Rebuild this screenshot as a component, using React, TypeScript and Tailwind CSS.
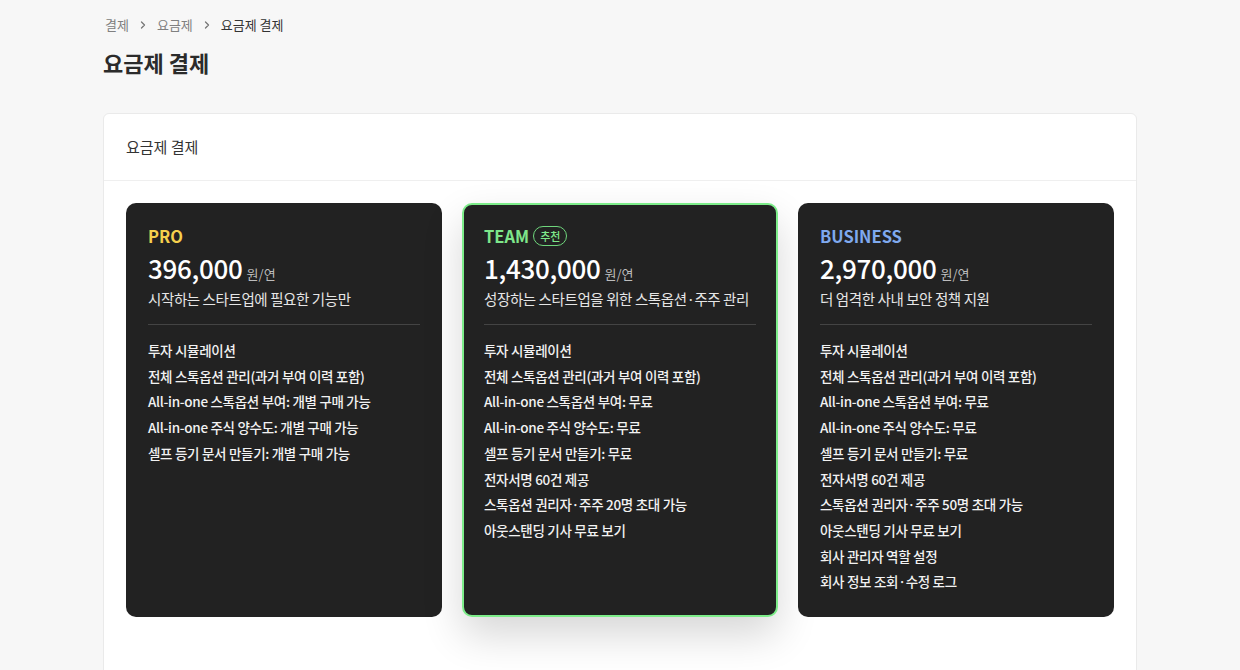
import React from 'react';

type Plan = {
  name: string;
  nameClass: string;
  price: string;
  tagline: string;
  features: string[];
  recommended?: boolean;
};

const PLANS: Plan[] = [
  {
    name: 'PRO',
    nameClass: 'text-[#f6d04d]',
    price: '396,000',
    tagline: '시작하는 스타트업에 필요한 기능만',
    features: [
      '투자 시뮬레이션',
      '전체 스톡옵션 관리(과거 부여 이력 포함)',
      'All-in-one 스톡옵션 부여: 개별 구매 가능',
      'All-in-one 주식 양수도: 개별 구매 가능',
      '셀프 등기 문서 만들기: 개별 구매 가능',
    ],
  },
  {
    name: 'TEAM',
    nameClass: 'text-[#7ee68a]',
    price: '1,430,000',
    tagline: '성장하는 스타트업을 위한 스톡옵션·주주 관리',
    recommended: true,
    features: [
      '투자 시뮬레이션',
      '전체 스톡옵션 관리(과거 부여 이력 포함)',
      'All-in-one 스톡옵션 부여: 무료',
      'All-in-one 주식 양수도: 무료',
      '셀프 등기 문서 만들기: 무료',
      '전자서명 60건 제공',
      '스톡옵션 권리자·주주 20명 초대 가능',
      '아웃스탠딩 기사 무료 보기',
    ],
  },
  {
    name: 'BUSINESS',
    nameClass: 'text-[#7fa9ee]',
    price: '2,970,000',
    tagline: '더 엄격한 사내 보안 정책 지원',
    features: [
      '투자 시뮬레이션',
      '전체 스톡옵션 관리(과거 부여 이력 포함)',
      'All-in-one 스톡옵션 부여: 무료',
      'All-in-one 주식 양수도: 무료',
      '셀프 등기 문서 만들기: 무료',
      '전자서명 60건 제공',
      '스톡옵션 권리자·주주 50명 초대 가능',
      '아웃스탠딩 기사 무료 보기',
      '회사 관리자 역할 설정',
      '회사 정보 조회·수정 로그',
    ],
  },
];

const Chevron = () => (
  <svg width="12" height="12" viewBox="0 0 24 24" fill="none" stroke="#777" strokeWidth="2.6" strokeLinecap="round" strokeLinejoin="round">
    <path d="M9 6l6 6-6 6" />
  </svg>
);

const PlanCard = ({ plan }: { plan: Plan }) => (
  <div
    className={
      plan.recommended
        ? 'flex-1 rounded-[10px] bg-[#222222] border-2 border-[#7ded8a] px-[20px] pt-[20px] pb-[20px] shadow-[0_18px_40px_rgba(0,0,0,0.16)]'
        : 'flex-1 rounded-[10px] bg-[#222222] px-[22px] pt-[22px] pb-[22px]'
    }
  >
    <div className="flex items-center gap-[4px] h-[22px]">
      <span className={`text-[16.5px] font-semibold leading-[22px] ${plan.nameClass}`}>{plan.name}</span>
      {plan.recommended && (
        <span className="rounded-full border border-[#6fd67c] px-[6px] text-[11px] font-medium leading-[18px] text-[#7ee68a]">
          추천
        </span>
      )}
    </div>
    <div className="mt-[5px] flex items-baseline gap-[4px]">
      <span className="text-[26px] font-medium leading-[32px] tracking-[-0.3px] text-white">{plan.price}</span>
      <span className="text-[13px] leading-[20px] text-[#bdbdbd]">원/연</span>
    </div>
    <p className="mt-[4px] text-[14.5px] leading-[22px] tracking-[-0.4px] text-[#e6e6e6]">{plan.tagline}</p>
    <div className="mt-[14px] border-t border-[#444444]" />
    <ul className="mt-[13px] flex flex-col">
      {plan.features.map((f) => (
        <li key={f} className="text-[13.5px] font-medium leading-[25.7px] tracking-[-0.3px] text-[#f2f2f2]">
          {f}
        </li>
      ))}
    </ul>
  </div>
);

export default function App() {
  return (
    <div
      className="min-h-[670px] bg-[#f7f7f7] px-[103px] pt-[15px]"
      style={{ fontFamily: '"Noto Sans CJK KR", "Noto Sans", sans-serif' }}
    >
      <nav className="flex items-center gap-[8px] pl-[2px] text-[13px] leading-[20px]">
        <span className="text-[#808080]">결제</span>
        <Chevron />
        <span className="text-[#808080]">요금제</span>
        <Chevron />
        <span className="text-[#333333]">요금제 결제</span>
      </nav>
      <h1 className="mt-[11px] text-[22px] font-bold leading-[32px] text-[#2b2b2b]">요금제 결제</h1>

      <section className="mt-[35px] rounded-[6px] border border-[#eaeaea] bg-white">
        <div className="border-b border-[#efefef] px-[22px] py-[22px]">
          <h2 className="text-[15px] leading-[22px] text-[#333333]">요금제 결제</h2>
        </div>
        <div className="flex items-stretch gap-[20px] px-[22px] pt-[22px] pb-[60px]">
          {PLANS.map((p) => (
            <PlanCard key={p.name} plan={p} />
          ))}
        </div>
      </section>
    </div>
  );
}
